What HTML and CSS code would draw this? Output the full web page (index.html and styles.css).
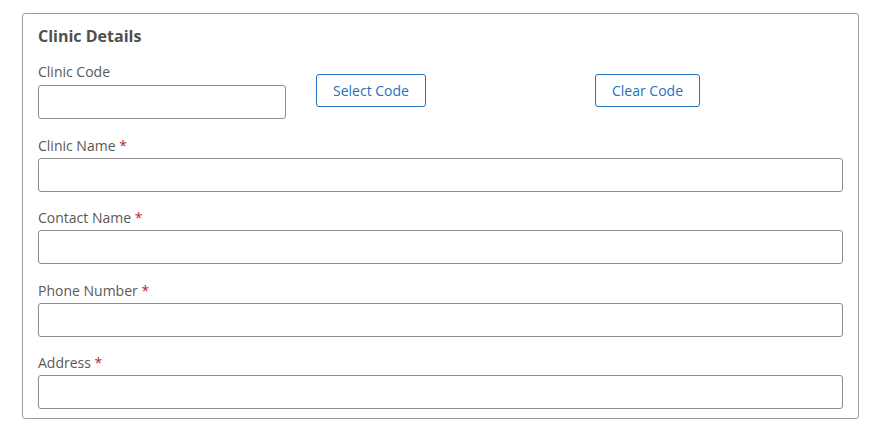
FILE: index.html
```html
<!DOCTYPE html>
<html>

<head>
    <meta charset="utf-8">
    <title>Clinic Details</title>
    <link rel="stylesheet" href="styles.css">
</head>

<body>
    <div class="panel">
        <div class="panel-title">Clinic Details</div>

        <div class="code-row">
            <div class="field">
                <label class="field-label">Clinic Code</label>
                <input type="text" class="text-input">
            </div>
            <div><button class="btn-outline">Select Code</button></div>
            <div><button class="btn-outline">Clear Code</button></div>
        </div>

        <div class="field field-row first">
            <label class="field-label">Clinic Name <span class="req">*</span></label>
            <input type="text" class="text-input">
        </div>
        <div class="field field-row">
            <label class="field-label">Contact Name <span class="req">*</span></label>
            <input type="text" class="text-input">
        </div>
        <div class="field field-row">
            <label class="field-label">Phone Number <span class="req">*</span></label>
            <input type="text" class="text-input">
        </div>
        <div class="field field-row">
            <label class="field-label">Address <span class="req">*</span></label>
            <input type="text" class="text-input">
        </div>
    </div>
</body>

</html>
```

FILE: styles.css
```css
html,
body {
    margin: 0;
    background-color: #fff;
    font-family: 'Open Sans', 'Noto Sans', sans-serif;
    font-size: 14px;
    color: #595959;
}

body {
    padding: 13px 29px 10px 22px;
}

.panel {
    border: solid 1px #9a9a9a;
    border-radius: 3px;
    padding: 10px 15px 9px 15px;
    display: flex;
    flex-direction: column;
}

.panel-title {
    font-size: 16px;
    font-weight: bold;
    color: #505050;
    line-height: 24px;
}

.code-row {
    display: grid;
    grid-template-columns: 248px 249px auto;
    column-gap: 30px;
    align-items: center;
    margin-top: 14px;
}

.code-row .field-label {
    margin-bottom: 3px;
}

.field {
    display: flex;
    flex-direction: column;
}

.field-row {
    margin-top: 16.33px;
}

.field-row.first {
    margin-top: 17px;
}

.field-label {
    line-height: 20px;
    margin-bottom: 2px;
}

.req {
    color: #b52a2a;
}

.text-input {
    box-sizing: border-box;
    width: 100%;
    height: 34px;
    border: solid 1px #8c8c8c;
    border-radius: 3px;
    padding: 4px 8px;
    font-family: inherit;
    font-size: 14px;
}

.btn-outline {
    height: 33px;
    padding: 0 16px;
    border: solid 1px #2470bf;
    border-radius: 3px;
    background-color: #fff;
    color: #2470bf;
    font-family: inherit;
    font-size: 14px;
}
```
